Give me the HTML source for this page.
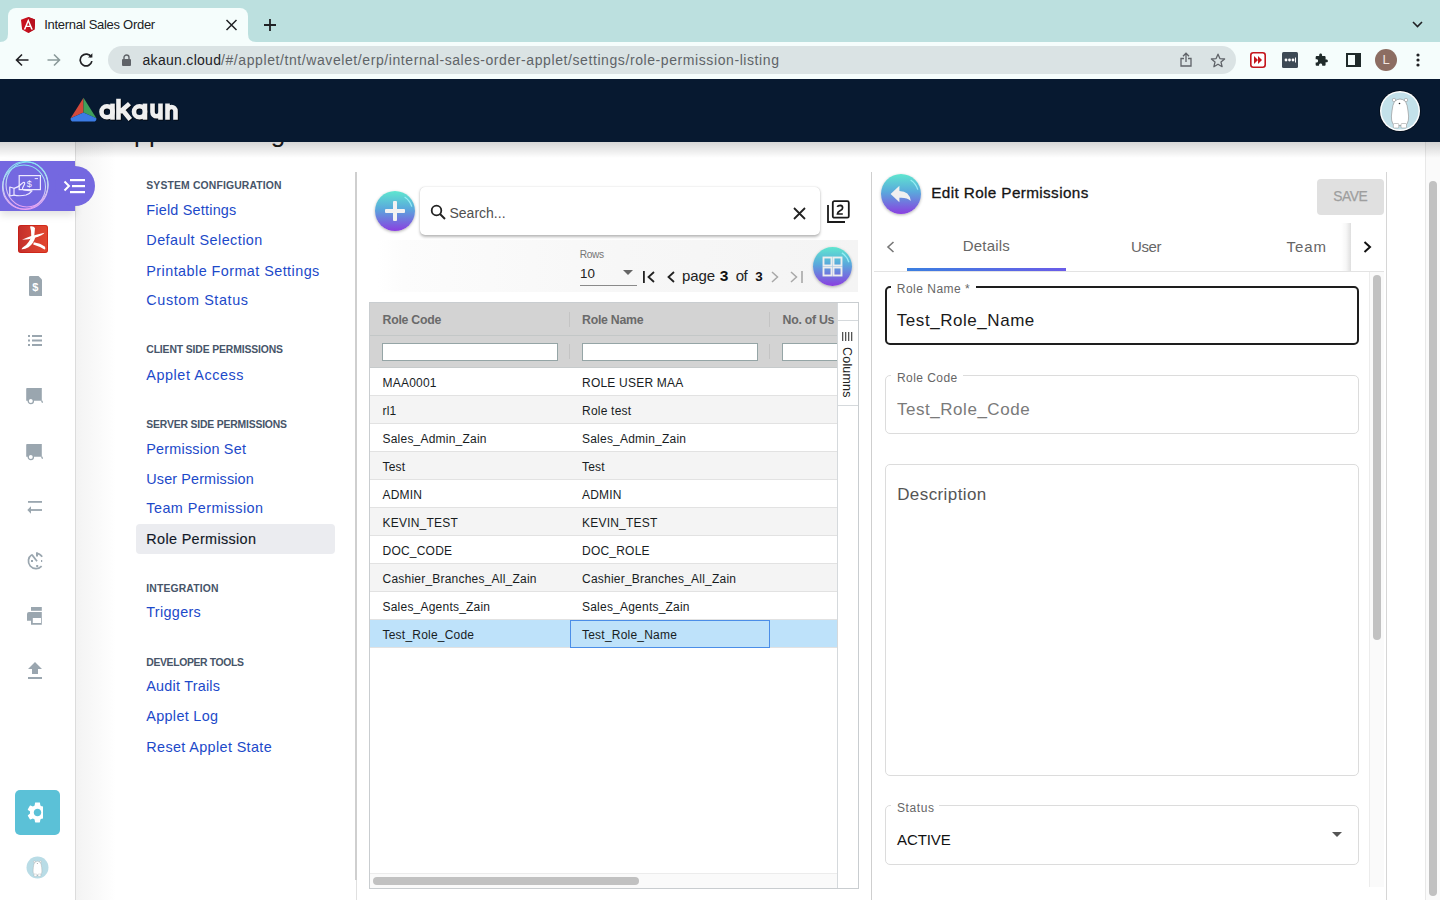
<!DOCTYPE html><html><head><meta charset="utf-8"><title>Internal Sales Order</title><style>
*{margin:0;padding:0;box-sizing:border-box}
html,body{width:1440px;height:900px;overflow:hidden;background:#fff;font-family:"Liberation Sans",sans-serif}
.a{position:absolute}
.t{position:absolute;white-space:nowrap;font-family:"Liberation Sans",sans-serif}
</style></head><body>
<div class="a" style="left:0;top:0;width:1440px;height:42px;background:#bce0df"></div>
<div class="a" style="left:0;top:42px;width:1440px;height:37px;background:#f5fdfc"></div>
<div class="a" style="left:8px;top:8px;width:240px;height:35px;background:#f5fdfc;border-radius:8px 8px 0 0"></div>
<svg class="a" style="left:0;top:34px" width="8" height="8"><path d="M0 8 Q8 8 8 0 L8 8 Z" fill="#f5fdfc"/></svg>
<svg class="a" style="left:248px;top:34px" width="8" height="8"><path d="M8 8 Q0 8 0 0 L0 8 Z" fill="#f5fdfc"/></svg>
<svg class="a" style="left:20.6px;top:16.9px" width="14.6" height="16" viewBox="0 0 250 264" preserveAspectRatio="none"><path d="M125 0L0 44l19 164 106 56 106-56 19-164z" fill="#c8101e"/><path d="M125 0v264l106-56 19-164z" fill="#b8101e"/><path d="M125 30L47 206h29l16-39h66l16 39h29L125 30zm23 113h-46l23-55z" fill="#fff"/></svg>
<svg class="a" style="left:225px;top:19px" width="13" height="12" viewBox="0 0 13 12"><path d="M1.5 1 L11.5 11 M11.5 1 L1.5 11" stroke="#202124" stroke-width="1.5"/></svg>
<svg class="a" style="left:263px;top:18px" width="14" height="14" viewBox="0 0 14 14"><path d="M7 1V13M1 7H13" stroke="#202124" stroke-width="1.8"/></svg>
<svg class="a" style="left:1412px;top:21px" width="11" height="7" viewBox="0 0 11 7"><path d="M1 1L5.5 5.5L10 1" stroke="#202124" stroke-width="1.6" fill="none"/></svg>
<svg class="a" style="left:15px;top:53px" width="14" height="14" viewBox="0 0 14 14"><path d="M13.5 7H1.5M7 1.5L1.5 7L7 12.5" stroke="#202124" stroke-width="1.6" fill="none"/></svg>
<svg class="a" style="left:47px;top:53px" width="14" height="14" viewBox="0 0 14 14"><path d="M0.5 7H12.5M7 1.5L12.5 7L7 12.5" stroke="#8a9a9a" stroke-width="1.6" fill="none"/></svg>
<svg class="a" style="left:79px;top:53px" width="15" height="14" viewBox="0 0 15 14"><path d="M12.3 4.2A5.9 5.9 0 1 0 12.9 8.2" stroke="#202124" stroke-width="1.7" fill="none"/><path d="M9 4.6H13.4V0.3Z" fill="#202124"/></svg>
<div class="a" style="left:108px;top:46px;width:1128px;height:28px;background:#dae3e4;border-radius:14px"></div>
<svg class="a" style="left:122px;top:54px" width="9" height="12" viewBox="0 0 9 12"><path d="M2 5V3.5A2.5 2.5 0 0 1 7 3.5V5" stroke="#5f6368" stroke-width="1.4" fill="none"/><rect x="0" y="5" width="9" height="7" rx="1" fill="#5f6368"/></svg>
<svg class="a" style="left:1180px;top:52px" width="12" height="15" viewBox="0 0 12 15"><path d="M6 10V1.5M3 4.2L6 1.2L9 4.2" stroke="#5f6368" stroke-width="1.3" fill="none"/><path d="M4 6.5H1V14H11V6.5H8" stroke="#5f6368" stroke-width="1.3" fill="none"/></svg>
<svg class="a" style="left:1210px;top:53px" width="16" height="15" viewBox="0 0 16 15"><path d="M8 1.2L9.9 5.6L14.6 6L11 9.1L12.1 13.7L8 11.2L3.9 13.7L5 9.1L1.4 6L6.1 5.6Z" stroke="#5f6368" stroke-width="1.3" fill="none" stroke-linejoin="round"/></svg>
<svg class="a" style="left:1250px;top:52px" width="16" height="16" viewBox="0 0 16 16"><rect x="0.8" y="0.8" width="14.4" height="14.4" rx="2.5" fill="#fff" stroke="#c4161c" stroke-width="1.6"/><path d="M4 4L8 8L4 12ZM8 4L12 8L8 12Z" fill="#c4161c"/></svg>
<svg class="a" style="left:1282px;top:52px" width="16" height="16" viewBox="0 0 16 16"><rect x="0" y="0" width="16" height="16" rx="1.5" fill="#3d4a55"/><circle cx="4" cy="8" r="1.4" fill="#fff"/><circle cx="7.5" cy="8" r="1.4" fill="#fff"/><circle cx="11" cy="8" r="1.4" fill="#fff"/><rect x="13" y="5.5" width="1" height="5" fill="#fff"/></svg>
<svg class="a" style="left:1314px;top:53px" width="15" height="14" viewBox="0 0 24 24"><path d="M20.5 11H19V7c0-1.1-.9-2-2-2h-4V3.5C13 2.12 11.88 1 10.5 1S8 2.12 8 3.5V5H4c-1.1 0-1.99.9-1.99 2v3.8H3.5c1.49 0 2.7 1.21 2.7 2.7s-1.21 2.7-2.7 2.7H2V20c0 1.1.9 2 2 2h3.8v-1.5c0-1.49 1.21-2.7 2.7-2.7 1.49 0 2.7 1.21 2.7 2.7V22H17c1.1 0 2-.9 2-2v-4h1.5c1.38 0 2.5-1.12 2.5-2.5S21.88 11 20.5 11z" fill="#1f2a2a"/></svg>
<svg class="a" style="left:1346px;top:53px" width="15" height="14" viewBox="0 0 15 14"><rect x="1" y="1" width="13" height="12" stroke="#1f2a2a" stroke-width="2" fill="none"/><rect x="9" y="1" width="5" height="12" fill="#1f2a2a"/></svg>
<div class="a" style="left:1375px;top:49px;width:22px;height:22px;border-radius:50%;background:#8c6d62;color:#f2e6e0;font-size:13px;line-height:22px;text-align:center;font-family:'Liberation Sans',sans-serif">L</div>
<svg class="a" style="left:1416px;top:53px" width="4" height="14" viewBox="0 0 4 14"><circle cx="2" cy="2" r="1.6" fill="#202124"/><circle cx="2" cy="7" r="1.6" fill="#202124"/><circle cx="2" cy="12" r="1.6" fill="#202124"/></svg>
<div class="a" style="left:0;top:79px;width:1440px;height:821px;background:#fff"></div>
<div class="a" style="left:76px;top:142px;width:40px;height:758px;background:linear-gradient(to right,#f3f3f3,#ffffff)"></div>
<div class="a" style="left:75px;top:142px;width:1px;height:758px;background:#dcdcdc"></div>
<div class="a" style="left:1425px;top:142px;width:15px;height:758px;background:#fafafa;border-left:1px solid #e8e8e8"></div>
<div class="a" style="left:1429px;top:181px;width:8px;height:715px;background:#c1c1c1;border-radius:4px"></div>
<div class="t" id="ptitle" style="left:116.00px;top:119.71px;font-size:26px;line-height:26px;color:#1a1a1a;font-weight:400;letter-spacing:0.000px;letter-spacing:0.57px;">Applet Settings<span class="bl" style="display:inline-block;width:0;height:0;vertical-align:baseline"></span></div>
<div class="a" style="left:0;top:142px;width:1440px;height:16px;background:linear-gradient(to bottom,rgba(0,0,0,0.16),rgba(0,0,0,0))"></div>
<div class="a" style="left:0;top:79px;width:1440px;height:63px;background:#071930"></div>
<svg class="a" style="left:70px;top:97px" width="27" height="26" viewBox="0 0 27 26"><path d="M13.5 0.7 L0.6 21.2 L13.5 15.5Z" fill="#d4493a"/><path d="M13.5 0.7 L26.4 21.2 L13.5 15.5Z" fill="#3fa05a"/><path d="M0.6 21.2 L13.5 15.5 L26.4 21.2 Q26.6 24.6 23.5 24.6 L3.5 24.6 Q0.4 24.6 0.6 21.2Z" fill="#3b7be4"/></svg>
<svg class="a" style="left:99px;top:98px" width="82" height="25" viewBox="0 0 82 25"><g fill="none" stroke="#02060c" stroke-width="4.8" transform="translate(0.8 0.8)"><circle cx="8" cy="13.7" r="5.5"/><path d="M13.5 5.6V21.7"/><path d="M19.5 0.8V21.7M21 14L30.5 5.6M24 12.5L31.3 21.5"/><circle cx="40.5" cy="13.7" r="5.5"/><path d="M46 5.6V21.7"/><path d="M53.5 5.6V14.2A4 4 0 0 0 61.5 14.2V5.6M61.5 5.6V21.7"/><path d="M68.5 21.7V13A4 4 0 0 1 76.5 13V21.7M68.5 5.6V21.7"/></g><g fill="none" stroke="#efefef" stroke-width="4.6"><circle cx="8" cy="13.7" r="5.5"/><path d="M13.5 5.6V21.7"/><path d="M19.5 0.8V21.7M21 14L30.5 5.6M24 12.5L31.3 21.5"/><circle cx="40.5" cy="13.7" r="5.5"/><path d="M46 5.6V21.7"/><path d="M53.5 5.6V14.2A4 4 0 0 0 61.5 14.2V5.6M61.5 5.6V21.7"/><path d="M68.5 21.7V13A4 4 0 0 1 76.5 13V21.7M68.5 5.6V21.7"/></g></svg>
<svg class="a" style="left:1378px;top:89px" width="44" height="44" viewBox="0 0 44 44"><circle cx="22" cy="22" r="21" fill="#04101f"/><circle cx="22" cy="22" r="20" fill="#fff"/><circle cx="22" cy="22" r="18.6" fill="#c3e1ea"/><g transform="translate(2 1)"><circle cx="14" cy="10" r="1.7" fill="#fff" stroke="#888" stroke-width="0.5"/><circle cx="26" cy="10" r="1.7" fill="#fff" stroke="#888" stroke-width="0.5"/><path d="M14.5 11.5Q20 6.5 25.5 11.5Q27.5 15 28 21Q30 32 25.5 35.5H14.5Q10 32 12 21Q12.5 15 14.5 11.5Z" fill="#fff" stroke="#8a8a8a" stroke-width="0.6"/><rect x="13.3" y="33.5" width="5.5" height="4.5" rx="1" fill="#fff" stroke="#8a8a8a" stroke-width="0.5"/><rect x="21" y="33.5" width="5.5" height="4.5" rx="1" fill="#fff" stroke="#8a8a8a" stroke-width="0.5"/><circle cx="19.5" cy="13.5" r="0.8" fill="#222"/></g></svg>
<div class="a" style="left:0;top:161px;width:75px;height:50px;background:#7468e0;box-shadow:0 4px 8px rgba(0,0,0,0.12)"></div>
<div class="a" style="left:55px;top:166px;width:40px;height:40px;border-radius:20px;background:#7468e0"></div>
<svg class="a" style="left:0;top:160px" width="52" height="52" viewBox="0 0 52 52"><defs><linearGradient id="rg" x1="0" y1="0" x2="0" y2="1"><stop offset="0" stop-color="#86e6f2"/><stop offset="0.5" stop-color="#c8d8f4"/><stop offset="1" stop-color="#e9a0f2"/></linearGradient></defs><ellipse cx="25.5" cy="25.5" rx="22.5" ry="24" fill="none" stroke="url(#rg)" stroke-width="1.1"/><ellipse cx="27" cy="24.5" rx="21" ry="22.5" fill="none" stroke="url(#rg)" stroke-width="1.1"/><ellipse cx="24" cy="27" rx="21.5" ry="22" fill="none" stroke="url(#rg)" stroke-width="1.1"/><rect x="19.2" y="15.6" width="21.2" height="14" fill="none" stroke="#eeeaff" stroke-width="1.2"/><path d="M34.7 18.6H38" stroke="#eeeaff" stroke-width="1"/><text x="26.8" y="26.6" font-size="9" fill="#f2f0ff" font-family="Liberation Sans">$</text><path d="M9.8 27L14 28.3V35.2L9.8 36Z" fill="none" stroke="#eeeaff" stroke-width="1.2" stroke-linejoin="round"/><path d="M14 28.3Q18 27.8 21 24.2L23 22.6Q25 21.8 24.6 24L22.6 28Q22.2 30.2 25 30.2L32 30.8Q30 33.6 26 35Q20 36.4 14 35.2" fill="none" stroke="#eeeaff" stroke-width="1.2" stroke-linejoin="round"/></svg>
<svg class="a" style="left:63px;top:178px" width="23" height="16" viewBox="0 0 23 16"><path d="M1.5 3.5L6 8L1.5 12.5" stroke="#fff" stroke-width="2" fill="none"/><rect x="7" y="1" width="15" height="2.2" fill="#fff"/><rect x="9" y="7" width="13" height="2.2" fill="#fff"/><rect x="7" y="13" width="15" height="2.2" fill="#fff"/></svg>
<div class="a" style="left:18px;top:225px;width:30px;height:28px;border-radius:3px;background:linear-gradient(to right,#c22e2b,#d23a2e 40%,#e2472f);box-shadow:inset 0 0 0 1px rgba(200,20,10,0.55)"></div>
<svg class="a" style="left:18px;top:225px" width="30" height="28" viewBox="0 0 30 28"><path d="M12 1.5Q15.5 0.8 17 3L16.3 10.5L13.3 12.2Q13.6 6 12 1.5Z" fill="#fff"/><path d="M4 14.8Q11 11 26.5 7.8Q25 10.3 17 12.8Q10.5 14.8 4 14.8Z" fill="#fff"/><path d="M13.3 11.5L17.3 12.3Q15.5 19 10.5 22.2Q6.5 24.6 3.5 24.2Q4 22.6 6 21.6Q11 18.3 13.3 11.5Z" fill="#fff"/><path d="M15.8 17.2Q22.5 18.2 26.8 21.5Q28 24.2 26.5 24.6Q21 21.3 15.2 19.6Z" fill="#fff"/></svg>
<svg class="a" style="left:29px;top:276px" width="13" height="20" viewBox="0 0 13 20"><path d="M1 0H9.5L13 3.5V20H1Q0 20 0 19V1Q0 0 1 0Z" fill="#9aa6af"/><text x="3.2" y="15" font-size="11" font-weight="bold" fill="#fff" font-family="Liberation Sans">$</text></svg>
<svg class="a" style="left:28px;top:335px" width="14" height="11" viewBox="0 0 14 11"><rect x="0" y="0" width="2" height="2" fill="#9aa6af"/><rect x="0" y="4.5" width="2" height="2" fill="#9aa6af"/><rect x="0" y="9" width="2" height="2" fill="#9aa6af"/><rect x="4" y="0" width="10" height="2" fill="#9aa6af"/><rect x="4" y="4.5" width="10" height="2" fill="#9aa6af"/><rect x="4" y="9" width="10" height="2" fill="#9aa6af"/></svg>
<svg class="a" style="left:26px;top:388px" width="17" height="17" viewBox="0 0 17 17"><path d="M1 0H15.8V12.7H0.2V1Q0.2 0 1 0Z" fill="#9aa6af"/><circle cx="4.8" cy="13" r="2.6" fill="#fff" stroke="#9aa6af" stroke-width="1.3"/><path d="M15.5 12.5L16.6 14.6" stroke="#9aa6af" stroke-width="1.3"/></svg>
<svg class="a" style="left:26px;top:444px" width="17" height="17" viewBox="0 0 17 17"><path d="M1 0H15.8V12.7H0.2V1Q0.2 0 1 0Z" fill="#9aa6af"/><circle cx="4.8" cy="13" r="2.6" fill="#fff" stroke="#9aa6af" stroke-width="1.3"/><path d="M15.5 12.5L16.6 14.6" stroke="#9aa6af" stroke-width="1.3"/></svg>
<svg class="a" style="left:27px;top:500px" width="16" height="15" viewBox="0 0 16 15"><rect x="1" y="1" width="14" height="1.8" fill="#9aa6af"/><path d="M0.3 10L4 6.3V13.7Z" fill="#9aa6af"/><rect x="3.5" y="9.1" width="11.5" height="1.8" fill="#9aa6af"/></svg>
<svg class="a" style="left:27px;top:551px" width="17" height="20" viewBox="0 0 17 20"><path d="M14.65 15.09A7.6 7.6 0 1 1 4.86 3.63" stroke="#9aa6af" stroke-width="1.7" fill="none"/><path d="M9 2.4A7.6 7.6 0 0 1 15.2 5.8" stroke="#9aa6af" stroke-width="1.7" fill="none"/><rect x="9" y="1.5" width="2" height="4" fill="#9aa6af"/><path d="M4.86 3.63L10 10.3" stroke="#9aa6af" stroke-width="1.7"/><rect x="4" y="9" width="2" height="2" fill="#9aa6af"/><rect x="9.2" y="14" width="2" height="2" fill="#9aa6af"/><rect x="14" y="9" width="1.2" height="2" fill="#9aa6af"/></svg>
<svg class="a" style="left:27px;top:607px" width="15" height="18" viewBox="0 0 15 18"><rect x="4" y="0" width="10.8" height="3.8" fill="#9aa6af"/><path d="M2 5H14.8V17.8H4V13.8H0V7Q0 5 2 5Z" fill="#9aa6af"/><rect x="5.8" y="11" width="8.2" height="5" fill="#fff"/></svg>
<svg class="a" style="left:28px;top:662px" width="14" height="17" viewBox="0 0 14 17"><path d="M7 0L14 7H10V12H4V7H0Z" fill="#9aa6af"/><rect x="0" y="15" width="14" height="2" fill="#9aa6af"/></svg>
<div class="a" style="left:15px;top:790px;width:45px;height:45px;border-radius:5px;background:#5bc1d7"></div>
<div class="a" style="left:26px;top:801px;width:16.5px;height:23px;overflow:hidden"><svg class="a" style="left:-1.5px;top:-1px" width="25" height="25" viewBox="0 0 24 24"><path fill="#fff" d="M19.14 12.94c.04-.3.06-.61.06-.94 0-.32-.02-.64-.07-.94l2.03-1.58c.18-.14.23-.41.12-.61l-1.92-3.32c-.12-.22-.37-.29-.59-.22l-2.39.96c-.5-.38-1.030-.7-1.62-.94l-.36-2.54c-.04-.24-.24-.41-.48-.41h-3.84c-.24 0-.43.17-.47.41l-.36 2.54c-.59.24-1.13.57-1.62.94l-2.39-.96c-.22-.08-.47 0-.59.22L2.74 8.87c-.12.21-.08.47.12.61l2.03 1.58c-.05.3-.09.63-.09.94s.02.64.07.94l-2.03 1.58c-.18.14-.23.41-.12.61l1.92 3.32c.12.22.37.29.59.22l2.39-.96c.5.38 1.03.7 1.62.94l.36 2.54c.05.24.24.41.48.41h3.84c.24 0 .44-.17.47-.41l.36-2.54c.59-.24 1.13-.56 1.62-.94l2.39.96c.22.08.47 0 .59-.22l1.92-3.32c.12-.22.07-.47-.12-.61l-2.01-1.58zM12 15.6c-1.98 0-3.6-1.62-3.6-3.6s1.62-3.6 3.6-3.6 3.6 1.62 3.6 3.6-1.62 3.6-3.6 3.6z"/></svg></div>
<svg class="a" style="left:26px;top:856px" width="23" height="23" viewBox="0 0 44 44"><circle cx="22" cy="22" r="21" fill="#b9dce6"/><g transform="translate(2 1)"><circle cx="14" cy="10" r="1.7" fill="#fff" stroke="#888" stroke-width="0.5"/><circle cx="26" cy="10" r="1.7" fill="#fff" stroke="#888" stroke-width="0.5"/><path d="M14.5 11.5Q20 6.5 25.5 11.5Q27.5 15 28 21Q30 32 25.5 35.5H14.5Q10 32 12 21Q12.5 15 14.5 11.5Z" fill="#fff" stroke="#8a8a8a" stroke-width="0.6"/><rect x="13.3" y="33.5" width="5.5" height="4.5" rx="1" fill="#fff" stroke="#8a8a8a" stroke-width="0.5"/><rect x="21" y="33.5" width="5.5" height="4.5" rx="1" fill="#fff" stroke="#8a8a8a" stroke-width="0.5"/><circle cx="19.5" cy="13.5" r="0.8" fill="#222"/></g></svg>
<div class="a" style="left:136px;top:524px;width:199px;height:30px;border-radius:4px;background:#ebecf0"></div>
<div class="a" style="left:355px;top:172px;width:2px;height:708px;background:#cfcfcf"></div>
<div class="a" style="left:356px;top:880px;width:1px;height:20px;background:#e0e0e0"></div>
<div class="a" style="left:375px;top:191px;width:40px;height:40px;border-radius:50%;background:linear-gradient(to bottom,#5fe6cf 0%,#5aa8dc 45%,#8a3fe0 100%);box-shadow:0 1px 3px rgba(0,0,0,0.3)"><svg class="a" style="left:0;top:0" width="40" height="40" viewBox="0 0 40 40"><path d="M29.6 6.0 A17.6 17.6 0 0 1 36.800000000000004 15.600000000000001" stroke="rgba(170,250,255,0.75)" stroke-width="1.3" fill="none"/><rect x="10" y="18" width="20" height="4" rx="1" fill="#f2f2f2"/><rect x="18" y="10" width="4" height="20" rx="1" fill="#f2f2f2"/></svg></div>
<div class="a" style="left:420px;top:187px;width:400px;height:48px;border-radius:5px;background:#fff;box-shadow:0 1.5px 3px rgba(0,0,0,0.28),0 0 1px rgba(0,0,0,0.15)"></div>
<svg class="a" style="left:430px;top:204px" width="16" height="16" viewBox="0 0 16 16"><circle cx="6.5" cy="6.5" r="4.8" stroke="#222" stroke-width="1.8" fill="none"/><path d="M10 10L15 15" stroke="#222" stroke-width="2"/></svg>
<div class="t" style="left:449.5px;top:203.5px;font-size:14px;line-height:18px;color:#505050;letter-spacing:0px">Search...</div>
<svg class="a" style="left:793px;top:207px" width="13" height="13" viewBox="0 0 13 13"><path d="M1 1L12 12M12 1L1 12" stroke="#222" stroke-width="1.8"/></svg>
<svg class="a" style="left:827px;top:200px" width="23" height="23" viewBox="0 0 23 23"><rect x="5.8" y="1.2" width="16" height="16.5" rx="1.5" stroke="#1a1a1a" stroke-width="1.8" fill="none"/><path d="M1 5V22H18" stroke="#1a1a1a" stroke-width="1.8" fill="none"/><path d="M10.3 6.8Q11 5.3 13.3 5.3Q15.8 5.5 15.6 8Q15.5 9.6 13 10.8Q10.5 12.2 10.4 14H15.8" stroke="#1a1a1a" stroke-width="1.7" fill="none"/></svg>
<div class="a" style="left:378px;top:240px;width:480px;height:52px;background:linear-gradient(to right,#ffffff 0px,#fcfcfc 25px,#f7f7f7 50%,#f4f4f4 100%)"></div>
<div class="a" style="left:580px;top:285px;width:57px;height:1px;background:#8a8a8a"></div>
<svg class="a" style="left:623px;top:270px" width="10" height="5" viewBox="0 0 10 5"><path d="M0 0H10L5 5Z" fill="#666"/></svg>
<svg class="a" style="left:643px;top:271px" width="13" height="12" viewBox="0 0 13 12"><rect x="0" y="0" width="1.8" height="12" fill="#222"/><path d="M11 1L5.5 6L11 11" stroke="#222" stroke-width="1.8" fill="none"/></svg>
<svg class="a" style="left:667px;top:271px" width="8" height="12" viewBox="0 0 8 12"><path d="M7 1L1.5 6L7 11" stroke="#222" stroke-width="1.8" fill="none"/></svg>
<svg class="a" style="left:771px;top:271px" width="8" height="12" viewBox="0 0 8 12"><path d="M1 1L6.5 6L1 11" stroke="#a8a8a8" stroke-width="1.5" fill="none"/></svg>
<svg class="a" style="left:790px;top:271px" width="13" height="12" viewBox="0 0 13 12"><path d="M1 1L6.5 6L1 11" stroke="#a8a8a8" stroke-width="1.5" fill="none"/><rect x="11.2" y="0" width="1.6" height="12" fill="#a8a8a8"/></svg>
<div class="a" style="left:813px;top:247px;width:39px;height:39px;border-radius:50%;background:linear-gradient(to bottom,#5fe6cf 0%,#5aa8dc 45%,#8a3fe0 100%);box-shadow:0 1px 3px rgba(0,0,0,0.3)"><svg class="a" style="left:0;top:0" width="39" height="39" viewBox="0 0 39 39"><path d="M28.86 5.85 A17.16 17.16 0 0 1 35.88 15.21" stroke="rgba(170,250,255,0.75)" stroke-width="1.3" fill="none"/><rect x="10.5" y="10.5" width="8" height="8" fill="none" stroke="#eee" stroke-width="1.9"/><rect x="20.5" y="10.5" width="8" height="8" fill="none" stroke="#eee" stroke-width="1.9"/><rect x="10.5" y="20.5" width="8" height="8" fill="none" stroke="#eee" stroke-width="1.9"/><rect x="20.5" y="20.5" width="8" height="8" fill="none" stroke="#eee" stroke-width="1.9"/></svg></div>
<div class="a" style="left:369px;top:302px;width:490px;height:587px;border:1px solid #c9cdd0;background:#fff"></div>
<div class="a" style="left:370px;top:303px;width:467px;height:32px;background:#d3d3d3"></div>
<div class="a" style="left:370px;top:335px;width:467px;height:1px;background:#c3c7c7"></div>
<div class="a" style="left:370px;top:336px;width:467px;height:31px;background:#d3d3d3"></div>
<div class="a" style="left:370px;top:367px;width:467px;height:1px;background:#c6cacb"></div>
<div class="a" style="left:569px;top:312px;width:1px;height:15px;background:#c4c4c4"></div>
<div class="a" style="left:569px;top:344px;width:1px;height:15px;background:#c4c4c4"></div>
<div class="a" style="left:769px;top:312px;width:1px;height:15px;background:#c4c4c4"></div>
<div class="a" style="left:769px;top:344px;width:1px;height:15px;background:#c4c4c4"></div>
<div class="a" style="left:382px;top:343px;width:176px;height:18px;background:#fff;border:1px solid #95a5a6"></div>
<div class="a" style="left:582px;top:343px;width:176px;height:18px;background:#fff;border:1px solid #95a5a6"></div>
<div class="a" style="left:782px;top:343px;width:60px;height:18px;background:#fff;border:1px solid #95a5a6"></div>
<div class="a" style="left:370px;top:368px;width:467px;height:28px;background:#ffffff;border-bottom:1px solid #e2e2e2"></div>
<div class="a" style="left:370px;top:396px;width:467px;height:28px;background:#f4f4f4;border-bottom:1px solid #e2e2e2"></div>
<div class="a" style="left:370px;top:424px;width:467px;height:28px;background:#ffffff;border-bottom:1px solid #e2e2e2"></div>
<div class="a" style="left:370px;top:452px;width:467px;height:28px;background:#f4f4f4;border-bottom:1px solid #e2e2e2"></div>
<div class="a" style="left:370px;top:480px;width:467px;height:28px;background:#ffffff;border-bottom:1px solid #e2e2e2"></div>
<div class="a" style="left:370px;top:508px;width:467px;height:28px;background:#f4f4f4;border-bottom:1px solid #e2e2e2"></div>
<div class="a" style="left:370px;top:536px;width:467px;height:28px;background:#ffffff;border-bottom:1px solid #e2e2e2"></div>
<div class="a" style="left:370px;top:564px;width:467px;height:28px;background:#f4f4f4;border-bottom:1px solid #e2e2e2"></div>
<div class="a" style="left:370px;top:592px;width:467px;height:28px;background:#ffffff;border-bottom:1px solid #e2e2e2"></div>
<div class="a" style="left:370px;top:620px;width:467px;height:28px;background:#bee2fa;border-bottom:1px solid #e2e2e2"></div>
<div class="a" style="left:570px;top:620px;width:200px;height:28px;border:1px solid #4b8ee8"></div>
<div class="a" style="left:370px;top:873px;width:467px;height:15px;background:#fafafa;border-top:1px solid #ececec"></div>
<div class="a" style="left:373px;top:877px;width:266px;height:8px;border-radius:4px;background:#c1c1c1"></div>
<div class="a" style="left:871px;top:172px;width:1px;height:728px;background:#cfcfcf"></div>
<div class="a" style="left:1386px;top:172px;width:1px;height:728px;background:#d6d6d6"></div>
<div class="a" style="left:881px;top:174px;width:40px;height:40px;border-radius:50%;background:linear-gradient(to bottom,#5fe6cf 0%,#5aa8dc 45%,#8a3fe0 100%);box-shadow:0 1px 3px rgba(0,0,0,0.3)"><svg class="a" style="left:0;top:0" width="40" height="40" viewBox="0 0 40 40"><path d="M29.6 6.0 A17.6 17.6 0 0 1 36.800000000000004 15.600000000000001" stroke="rgba(170,250,255,0.75)" stroke-width="1.3" fill="none"/><path d="M9.6 19.9L18.4 11.8V17.1Q28.5 17.3 29.8 27Q26 23.3 18.4 23.8V28.2Z" fill="#f0f0f0"/></svg></div>
<div class="a" style="left:1317px;top:179px;width:67px;height:36px;border-radius:4px;background:#e0e0e0"></div>
<div class="a" style="left:874px;top:271px;width:510px;height:1px;background:#e3e3e3"></div>
<div class="a" style="left:907px;top:268px;width:159px;height:3px;background:linear-gradient(to right,#3b7fe0,#6a5ce8)"></div>
<svg class="a" style="left:886px;top:241px" width="9" height="12" viewBox="0 0 9 12"><path d="M7.5 1L2 6L7.5 11" stroke="#777" stroke-width="1.6" fill="none"/></svg>
<div class="a" style="left:1341px;top:223px;width:10px;height:48px;background:linear-gradient(to right,rgba(0,0,0,0),rgba(0,0,0,0.03) 50%,rgba(0,0,0,0.13))"></div>
<svg class="a" style="left:1363px;top:241px" width="9" height="12" viewBox="0 0 9 12"><path d="M1.5 1L7 6L1.5 11" stroke="#111" stroke-width="2" fill="none"/></svg>
<div class="a" style="left:1369px;top:272px;width:15px;height:615px;background:#fafafa;border-left:1px solid #ececec"></div>
<div class="a" style="left:1373px;top:275px;width:8px;height:365px;border-radius:4px;background:#c1c1c1"></div>
<div class="a" style="left:885px;top:286px;width:474px;height:59px;border:2px solid #1e1e1e;border-radius:5px"></div>
<div class="a" style="left:891px;top:280px;width:85px;height:10px;background:#fff"></div>
<div class="a" style="left:885px;top:375px;width:474px;height:59px;border:1px solid #dcdcdc;border-radius:5px"></div>
<div class="a" style="left:891px;top:370px;width:72px;height:10px;background:#fff"></div>
<div class="a" style="left:885px;top:464px;width:474px;height:312px;border:1px solid #dcdcdc;border-radius:5px"></div>
<div class="a" style="left:885px;top:805px;width:474px;height:60px;border:1px solid #dcdcdc;border-radius:5px"></div>
<div class="a" style="left:891px;top:800px;width:48px;height:10px;background:#fff"></div>
<svg class="a" style="left:1332px;top:832px" width="10" height="5" viewBox="0 0 10 5"><path d="M0 0H10L5 5Z" fill="#555"/></svg>
<div class="t" id="tabtitle" style="left:44.20px;top:18.21px;font-size:13px;line-height:13px;color:#202124;font-weight:400;letter-spacing:-0.281px;">Internal Sales Order<span class="bl" style="display:inline-block;width:0;height:0;vertical-align:baseline"></span></div>
<div class="t" id="url1" style="left:142.50px;top:52.71px;font-size:14px;line-height:14px;color:#202124;font-weight:400;letter-spacing:0.299px;">akaun.cloud<span class="bl" style="display:inline-block;width:0;height:0;vertical-align:baseline"></span></div>
<div class="t" id="url2" style="left:221.00px;top:52.71px;font-size:14px;line-height:14px;color:#5f6368;font-weight:400;letter-spacing:0.586px;">/#/applet/tnt/wavelet/erp/internal-sales-order-applet/settings/role-permission-listing<span class="bl" style="display:inline-block;width:0;height:0;vertical-align:baseline"></span></div>
<div class="t" id="h1" style="left:146.30px;top:181.40px;font-size:10.4px;line-height:10.4px;color:#475569;font-weight:700;letter-spacing:0.143px;">SYSTEM CONFIGURATION<span class="bl" style="display:inline-block;width:0;height:0;vertical-align:baseline"></span></div>
<div class="t" id="l1" style="left:146.30px;top:203.41px;font-size:14.4px;line-height:14.4px;color:#1c49c9;font-weight:400;letter-spacing:0.215px;">Field Settings<span class="bl" style="display:inline-block;width:0;height:0;vertical-align:baseline"></span></div>
<div class="t" id="l2" style="left:146.30px;top:233.41px;font-size:14.4px;line-height:14.4px;color:#1c49c9;font-weight:400;letter-spacing:0.450px;">Default Selection<span class="bl" style="display:inline-block;width:0;height:0;vertical-align:baseline"></span></div>
<div class="t" id="l3" style="left:146.30px;top:263.82px;font-size:14.4px;line-height:14.4px;color:#1c49c9;font-weight:400;letter-spacing:0.442px;">Printable Format Settings<span class="bl" style="display:inline-block;width:0;height:0;vertical-align:baseline"></span></div>
<div class="t" id="l4" style="left:146.30px;top:293.32px;font-size:14.4px;line-height:14.4px;color:#1c49c9;font-weight:400;letter-spacing:0.609px;">Custom Status<span class="bl" style="display:inline-block;width:0;height:0;vertical-align:baseline"></span></div>
<div class="t" id="h2" style="left:146.30px;top:345.31px;font-size:10.4px;line-height:10.4px;color:#475569;font-weight:700;letter-spacing:-0.137px;">CLIENT SIDE PERMISSIONS<span class="bl" style="display:inline-block;width:0;height:0;vertical-align:baseline"></span></div>
<div class="t" id="l5" style="left:146.30px;top:367.82px;font-size:14.4px;line-height:14.4px;color:#1c49c9;font-weight:400;letter-spacing:0.567px;">Applet Access<span class="bl" style="display:inline-block;width:0;height:0;vertical-align:baseline"></span></div>
<div class="t" id="h3" style="left:146.30px;top:419.51px;font-size:10.4px;line-height:10.4px;color:#475569;font-weight:700;letter-spacing:-0.184px;">SERVER SIDE PERMISSIONS<span class="bl" style="display:inline-block;width:0;height:0;vertical-align:baseline"></span></div>
<div class="t" id="l6" style="left:146.30px;top:441.60px;font-size:14.4px;line-height:14.4px;color:#1c49c9;font-weight:400;letter-spacing:0.217px;">Permission Set<span class="bl" style="display:inline-block;width:0;height:0;vertical-align:baseline"></span></div>
<div class="t" id="l7" style="left:146.30px;top:471.60px;font-size:14.4px;line-height:14.4px;color:#1c49c9;font-weight:400;letter-spacing:0.131px;">User Permission<span class="bl" style="display:inline-block;width:0;height:0;vertical-align:baseline"></span></div>
<div class="t" id="l8" style="left:146.30px;top:501.41px;font-size:14.4px;line-height:14.4px;color:#1c49c9;font-weight:400;letter-spacing:0.453px;">Team Permission<span class="bl" style="display:inline-block;width:0;height:0;vertical-align:baseline"></span></div>
<div class="t" id="l9" style="left:146.30px;top:531.51px;font-size:14.4px;line-height:14.4px;color:#111827;font-weight:400;letter-spacing:0.351px;-webkit-text-stroke:0.15px #111827;">Role Permission<span class="bl" style="display:inline-block;width:0;height:0;vertical-align:baseline"></span></div>
<div class="t" id="h4" style="left:146.30px;top:583.60px;font-size:10.4px;line-height:10.4px;color:#475569;font-weight:700;letter-spacing:0.128px;">INTEGRATION<span class="bl" style="display:inline-block;width:0;height:0;vertical-align:baseline"></span></div>
<div class="t" id="l10" style="left:146.30px;top:605.32px;font-size:14.4px;line-height:14.4px;color:#1c49c9;font-weight:400;letter-spacing:0.321px;">Triggers<span class="bl" style="display:inline-block;width:0;height:0;vertical-align:baseline"></span></div>
<div class="t" id="h5" style="left:146.30px;top:657.51px;font-size:10.4px;line-height:10.4px;color:#475569;font-weight:700;letter-spacing:-0.349px;">DEVELOPER TOOLS<span class="bl" style="display:inline-block;width:0;height:0;vertical-align:baseline"></span></div>
<div class="t" id="l11" style="left:146.30px;top:679.32px;font-size:14.4px;line-height:14.4px;color:#1c49c9;font-weight:400;letter-spacing:0.229px;">Audit Trails<span class="bl" style="display:inline-block;width:0;height:0;vertical-align:baseline"></span></div>
<div class="t" id="l12" style="left:146.30px;top:709.21px;font-size:14.4px;line-height:14.4px;color:#1c49c9;font-weight:400;letter-spacing:0.321px;">Applet Log<span class="bl" style="display:inline-block;width:0;height:0;vertical-align:baseline"></span></div>
<div class="t" id="l13" style="left:146.30px;top:739.60px;font-size:14.4px;line-height:14.4px;color:#1c49c9;font-weight:400;letter-spacing:0.364px;">Reset Applet State<span class="bl" style="display:inline-block;width:0;height:0;vertical-align:baseline"></span></div>
<div class="t" id="rows" style="left:579.80px;top:250.01px;font-size:10.2px;line-height:10.2px;color:#757575;font-weight:400;letter-spacing:-0.396px;">Rows<span class="bl" style="display:inline-block;width:0;height:0;vertical-align:baseline"></span></div>
<div class="t" id="ten" style="left:580.00px;top:266.50px;font-size:13.4px;line-height:13.4px;color:#222;font-weight:400;letter-spacing:0.000px;">10<span class="bl" style="display:inline-block;width:0;height:0;vertical-align:baseline"></span></div>
<div class="t" id="page" style="left:681.90px;top:267.61px;font-size:15px;line-height:15px;color:#222;font-weight:400;letter-spacing:-0.093px;">page<span class="bl" style="display:inline-block;width:0;height:0;vertical-align:baseline"></span></div>
<div class="t" id="p3a" style="left:719.80px;top:267.50px;font-size:15.5px;line-height:15.5px;color:#111;font-weight:700;letter-spacing:0.000px;">3<span class="bl" style="display:inline-block;width:0;height:0;vertical-align:baseline"></span></div>
<div class="t" id="of" style="left:735.80px;top:267.70px;font-size:15px;line-height:15px;color:#222;font-weight:400;letter-spacing:-0.612px;">of<span class="bl" style="display:inline-block;width:0;height:0;vertical-align:baseline"></span></div>
<div class="t" id="p3b" style="left:755.20px;top:269.70px;font-size:13.4px;line-height:13.4px;color:#111;font-weight:700;letter-spacing:0.000px;">3<span class="bl" style="display:inline-block;width:0;height:0;vertical-align:baseline"></span></div>
<div class="t" id="edit" style="left:931.30px;top:185.00px;font-size:15.3px;line-height:15.3px;color:#151515;font-weight:400;letter-spacing:0.369px;-webkit-text-stroke:0.3px #151515;">Edit Role Permissions<span class="bl" style="display:inline-block;width:0;height:0;vertical-align:baseline"></span></div>
<div class="t" id="save" style="left:1333.30px;top:190.41px;font-size:13.8px;line-height:13.8px;color:#9e9e9e;font-weight:400;letter-spacing:-0.431px;-webkit-text-stroke:0.25px #9e9e9e;">SAVE<span class="bl" style="display:inline-block;width:0;height:0;vertical-align:baseline"></span></div>
<div class="t" id="tdet" style="left:962.80px;top:238.31px;font-size:15px;line-height:15px;color:#666666;font-weight:400;letter-spacing:0.174px;">Details<span class="bl" style="display:inline-block;width:0;height:0;vertical-align:baseline"></span></div>
<div class="t" id="tuser" style="left:1131.00px;top:238.60px;font-size:15px;line-height:15px;color:#666666;font-weight:400;letter-spacing:-0.426px;">User<span class="bl" style="display:inline-block;width:0;height:0;vertical-align:baseline"></span></div>
<div class="t" id="tteam" style="left:1286.50px;top:238.60px;font-size:15px;line-height:15px;color:#666666;font-weight:400;letter-spacing:0.939px;">Team<span class="bl" style="display:inline-block;width:0;height:0;vertical-align:baseline"></span></div>
<div class="t" id="lrn" style="left:896.80px;top:283.01px;font-size:12px;line-height:12px;color:#666666;font-weight:400;letter-spacing:0.488px;">Role Name *<span class="bl" style="display:inline-block;width:0;height:0;vertical-align:baseline"></span></div>
<div class="t" id="vrn" style="left:896.80px;top:312.11px;font-size:17px;line-height:17px;color:#1a1a1a;font-weight:400;letter-spacing:0.546px;">Test_Role_Name<span class="bl" style="display:inline-block;width:0;height:0;vertical-align:baseline"></span></div>
<div class="t" id="lrc" style="left:897.00px;top:371.82px;font-size:12px;line-height:12px;color:#666666;font-weight:400;letter-spacing:0.435px;">Role Code<span class="bl" style="display:inline-block;width:0;height:0;vertical-align:baseline"></span></div>
<div class="t" id="vrc" style="left:897.00px;top:400.91px;font-size:17px;line-height:17px;color:#7a7a7a;font-weight:400;letter-spacing:0.532px;">Test_Role_Code<span class="bl" style="display:inline-block;width:0;height:0;vertical-align:baseline"></span></div>
<div class="t" id="desc" style="left:897.20px;top:486.00px;font-size:17px;line-height:17px;color:#555555;font-weight:400;letter-spacing:0.407px;">Description<span class="bl" style="display:inline-block;width:0;height:0;vertical-align:baseline"></span></div>
<div class="t" id="lst" style="left:897.00px;top:802.01px;font-size:12px;line-height:12px;color:#666666;font-weight:400;letter-spacing:0.594px;">Status<span class="bl" style="display:inline-block;width:0;height:0;vertical-align:baseline"></span></div>
<div class="t" id="vst" style="left:897.00px;top:832.01px;font-size:15px;line-height:15px;color:#111111;font-weight:400;letter-spacing:-0.097px;">ACTIVE<span class="bl" style="display:inline-block;width:0;height:0;vertical-align:baseline"></span></div>
<div class="t" id="th1" style="left:382.50px;top:314.21px;font-size:12.3px;line-height:12.3px;color:#6a6a6a;font-weight:700;letter-spacing:-0.252px;">Role Code<span class="bl" style="display:inline-block;width:0;height:0;vertical-align:baseline"></span></div>
<div class="t" id="th2" style="left:582.00px;top:314.21px;font-size:12.3px;line-height:12.3px;color:#6a6a6a;font-weight:700;letter-spacing:-0.252px;">Role Name<span class="bl" style="display:inline-block;width:0;height:0;vertical-align:baseline"></span></div>
<div class="t" id="th3" style="left:782.50px;top:314.21px;font-size:12.3px;line-height:12.3px;color:#6a6a6a;font-weight:700;letter-spacing:-0.252px;">No. of Us<span class="bl" style="display:inline-block;width:0;height:0;vertical-align:baseline"></span></div>
<div class="t" id="r0a" style="left:382.50px;top:376.71px;font-size:12px;line-height:12px;color:#181d1f;font-weight:400;letter-spacing:0.215px;">MAA0001<span class="bl" style="display:inline-block;width:0;height:0;vertical-align:baseline"></span></div>
<div class="t" id="r0b" style="left:582.00px;top:376.71px;font-size:12px;line-height:12px;color:#181d1f;font-weight:400;letter-spacing:0.217px;">ROLE USER MAA<span class="bl" style="display:inline-block;width:0;height:0;vertical-align:baseline"></span></div>
<div class="t" id="r1a" style="left:382.50px;top:404.71px;font-size:12px;line-height:12px;color:#181d1f;font-weight:400;letter-spacing:0.217px;">rl1<span class="bl" style="display:inline-block;width:0;height:0;vertical-align:baseline"></span></div>
<div class="t" id="r1b" style="left:582.00px;top:404.71px;font-size:12px;line-height:12px;color:#181d1f;font-weight:400;letter-spacing:0.217px;">Role test<span class="bl" style="display:inline-block;width:0;height:0;vertical-align:baseline"></span></div>
<div class="t" id="r2a" style="left:382.50px;top:432.71px;font-size:12px;line-height:12px;color:#181d1f;font-weight:400;letter-spacing:0.217px;">Sales_Admin_Zain<span class="bl" style="display:inline-block;width:0;height:0;vertical-align:baseline"></span></div>
<div class="t" id="r2b" style="left:582.00px;top:432.71px;font-size:12px;line-height:12px;color:#181d1f;font-weight:400;letter-spacing:0.217px;">Sales_Admin_Zain<span class="bl" style="display:inline-block;width:0;height:0;vertical-align:baseline"></span></div>
<div class="t" id="r3a" style="left:382.50px;top:460.71px;font-size:12px;line-height:12px;color:#181d1f;font-weight:400;letter-spacing:0.217px;">Test<span class="bl" style="display:inline-block;width:0;height:0;vertical-align:baseline"></span></div>
<div class="t" id="r3b" style="left:582.00px;top:460.71px;font-size:12px;line-height:12px;color:#181d1f;font-weight:400;letter-spacing:0.217px;">Test<span class="bl" style="display:inline-block;width:0;height:0;vertical-align:baseline"></span></div>
<div class="t" id="r4a" style="left:382.50px;top:488.71px;font-size:12px;line-height:12px;color:#181d1f;font-weight:400;letter-spacing:0.217px;">ADMIN<span class="bl" style="display:inline-block;width:0;height:0;vertical-align:baseline"></span></div>
<div class="t" id="r4b" style="left:582.00px;top:488.71px;font-size:12px;line-height:12px;color:#181d1f;font-weight:400;letter-spacing:0.217px;">ADMIN<span class="bl" style="display:inline-block;width:0;height:0;vertical-align:baseline"></span></div>
<div class="t" id="r5a" style="left:382.50px;top:516.71px;font-size:12px;line-height:12px;color:#181d1f;font-weight:400;letter-spacing:0.217px;">KEVIN_TEST<span class="bl" style="display:inline-block;width:0;height:0;vertical-align:baseline"></span></div>
<div class="t" id="r5b" style="left:582.00px;top:516.71px;font-size:12px;line-height:12px;color:#181d1f;font-weight:400;letter-spacing:0.217px;">KEVIN_TEST<span class="bl" style="display:inline-block;width:0;height:0;vertical-align:baseline"></span></div>
<div class="t" id="r6a" style="left:382.50px;top:544.71px;font-size:12px;line-height:12px;color:#181d1f;font-weight:400;letter-spacing:0.217px;">DOC_CODE<span class="bl" style="display:inline-block;width:0;height:0;vertical-align:baseline"></span></div>
<div class="t" id="r6b" style="left:582.00px;top:544.71px;font-size:12px;line-height:12px;color:#181d1f;font-weight:400;letter-spacing:0.217px;">DOC_ROLE<span class="bl" style="display:inline-block;width:0;height:0;vertical-align:baseline"></span></div>
<div class="t" id="r7a" style="left:382.50px;top:572.71px;font-size:12px;line-height:12px;color:#181d1f;font-weight:400;letter-spacing:0.219px;">Cashier_Branches_All_Zain<span class="bl" style="display:inline-block;width:0;height:0;vertical-align:baseline"></span></div>
<div class="t" id="r7b" style="left:582.00px;top:572.71px;font-size:12px;line-height:12px;color:#181d1f;font-weight:400;letter-spacing:0.219px;">Cashier_Branches_All_Zain<span class="bl" style="display:inline-block;width:0;height:0;vertical-align:baseline"></span></div>
<div class="t" id="r8a" style="left:382.50px;top:600.71px;font-size:12px;line-height:12px;color:#181d1f;font-weight:400;letter-spacing:0.217px;">Sales_Agents_Zain<span class="bl" style="display:inline-block;width:0;height:0;vertical-align:baseline"></span></div>
<div class="t" id="r8b" style="left:582.00px;top:600.71px;font-size:12px;line-height:12px;color:#181d1f;font-weight:400;letter-spacing:0.217px;">Sales_Agents_Zain<span class="bl" style="display:inline-block;width:0;height:0;vertical-align:baseline"></span></div>
<div class="t" id="r9a" style="left:382.50px;top:628.71px;font-size:12px;line-height:12px;color:#181d1f;font-weight:400;letter-spacing:0.217px;">Test_Role_Code<span class="bl" style="display:inline-block;width:0;height:0;vertical-align:baseline"></span></div>
<div class="t" id="r9b" style="left:582.00px;top:628.71px;font-size:12px;line-height:12px;color:#181d1f;font-weight:400;letter-spacing:0.217px;">Test_Role_Name<span class="bl" style="display:inline-block;width:0;height:0;vertical-align:baseline"></span></div>
<div class="a" style="left:837px;top:303px;width:21px;height:585px;background:#fff;border-left:1px solid #d5d9dc"></div>
<div class="a" style="left:837px;top:320px;width:21px;height:1px;background:#d5d9dc"></div>
<div class="a" style="left:837px;top:405px;width:21px;height:1px;background:#d5d9dc"></div>
<svg class="a" style="left:842px;top:332px" width="11" height="9" viewBox="0 0 11 9"><rect x="0" y="0" width="1.3" height="9" fill="#555"/><rect x="3" y="0" width="1.3" height="9" fill="#555"/><rect x="6" y="0" width="1.3" height="9" fill="#555"/><rect x="9" y="0" width="1.3" height="9" fill="#555"/></svg>
<div class="t" style="left:853px;top:347px;font-size:12.5px;line-height:12px;color:#222;transform:rotate(90deg);transform-origin:0 0;letter-spacing:0.2px">Columns</div>
</body></html>
